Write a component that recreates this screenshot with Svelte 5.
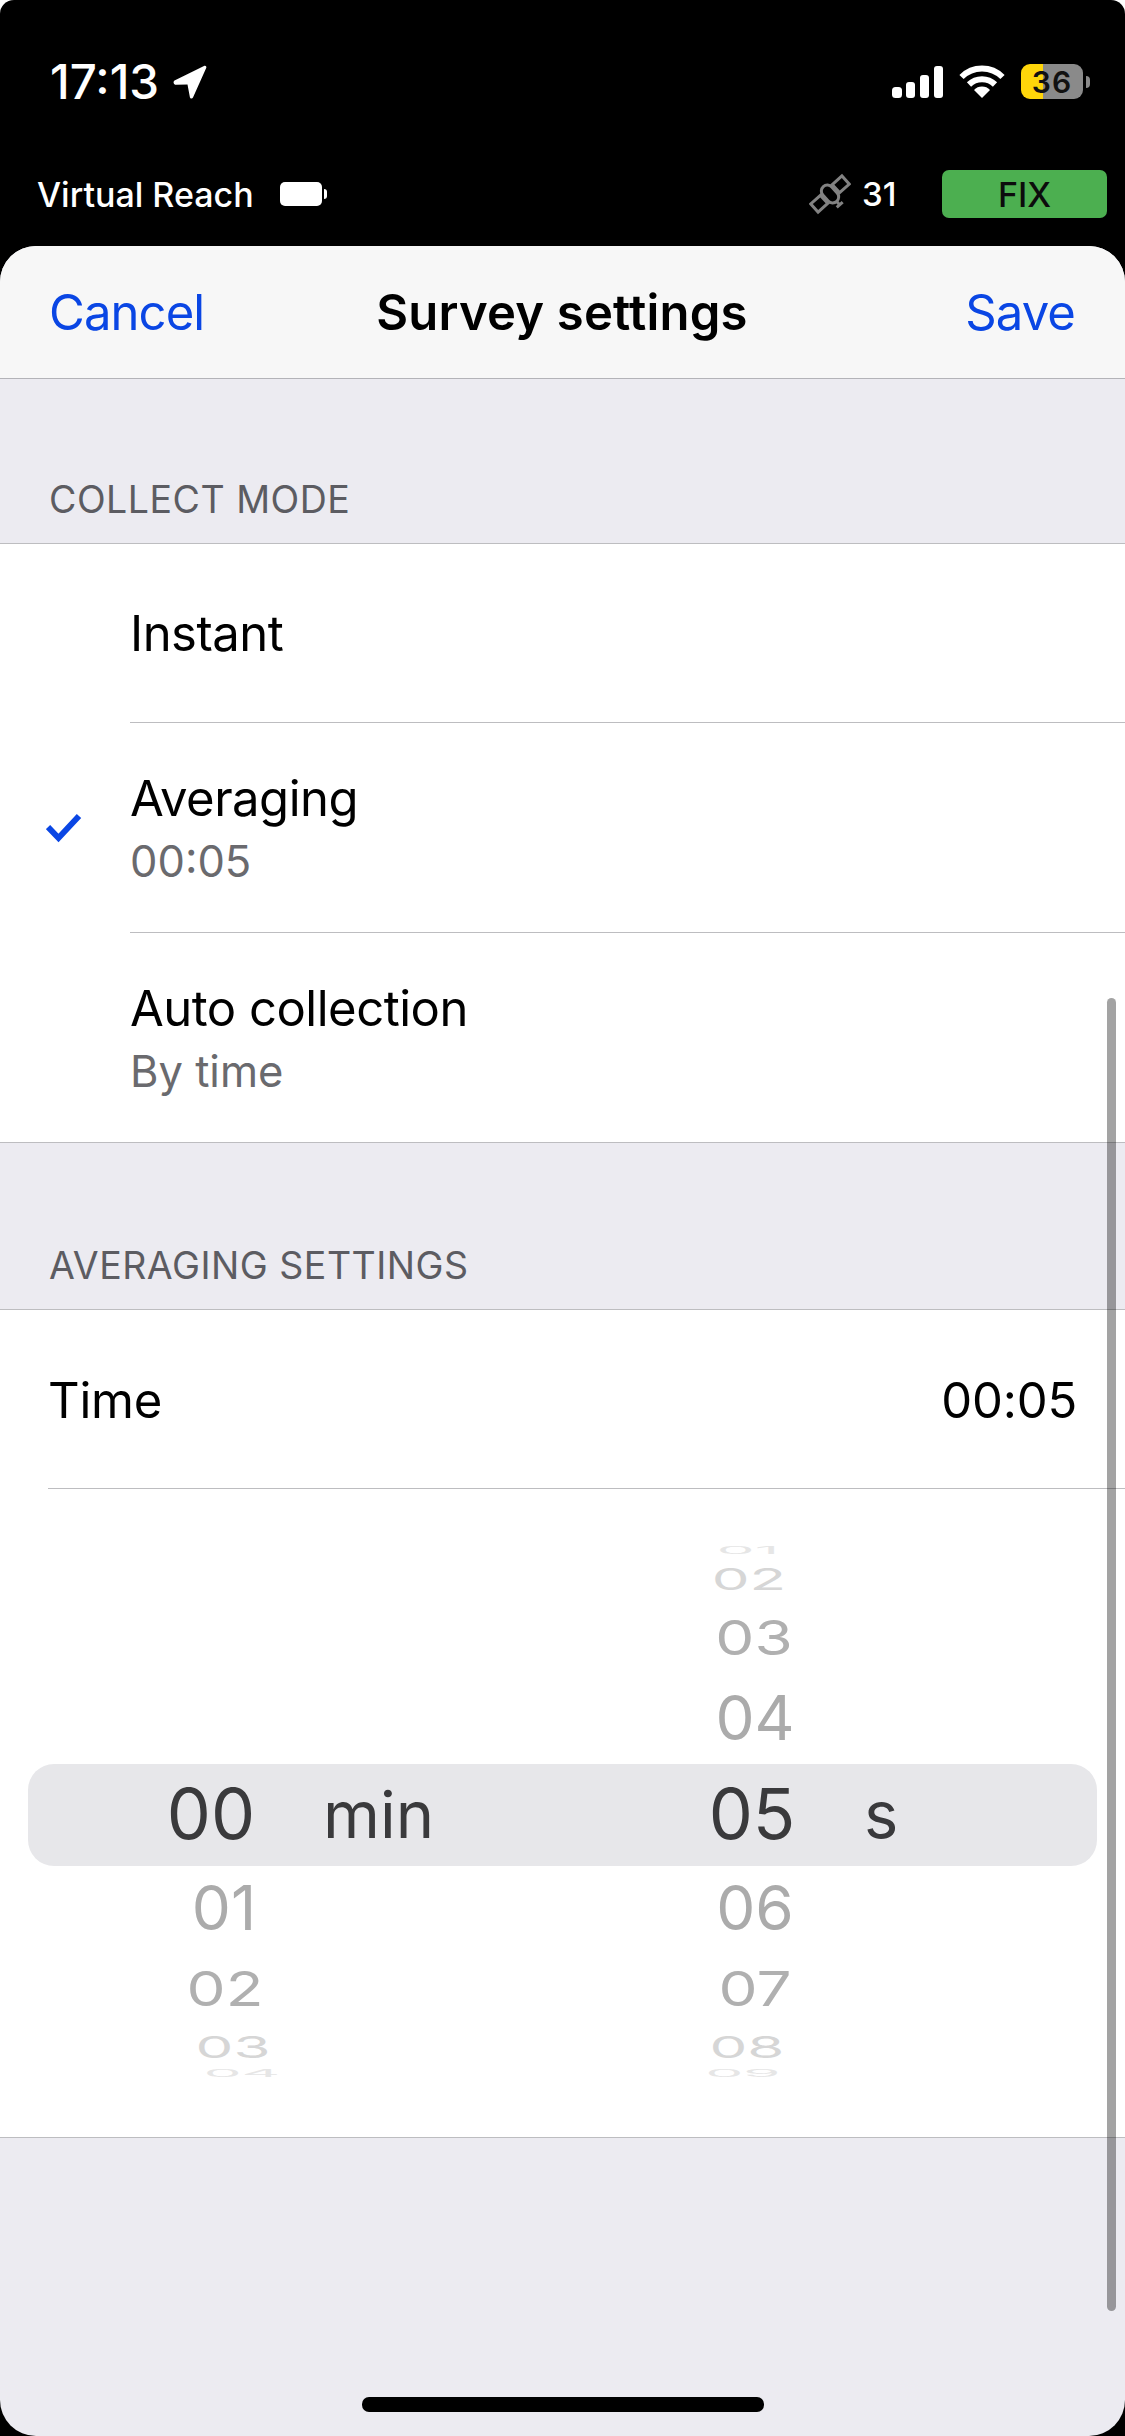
<script lang="ts">
  // picker rows share one height/scale curve so both wheels line up
  const rows = [
    { h: 28, k: 0.16, dy: -1, size: 60, color: '#e6e6e6' },
    { h: 43, k: 0.5, dy: -8, size: 60, color: '#d6d6d6' },
    { h: 70, k: 0.78, dy: -5, size: 62, color: '#b0b0b0' },
    { h: 89, k: 1, dy: -5, size: 62, color: '#ababab' },
    { h: 94, k: 1, dy: 0, size: 70, color: '#3a3a3c' },
    { h: 87, k: 1, dy: 3, size: 62, color: '#ababab' },
    { h: 70, k: 0.78, dy: 6, size: 62, color: '#b0b0b0' },
    { h: 43, k: 0.5, dy: 7, size: 60, color: '#d6d6d6' },
    { h: 28, k: 0.16, dy: -2, size: 60, color: '#e6e6e6' }
  ];

  const wheels = [
    {
      id: 'minutes',
      unit: 'min',
      values: ['', '', '', '', '00', '01', '02', '03', '04'],
      dx: [0, 0, 0, 0, 0, 13, 14, 22, 31]
    },
    {
      id: 'seconds',
      unit: 's',
      values: ['01', '02', '03', '04', '05', '06', '07', '08', '09'],
      dx: [-4, -3, 2, 3, 0, 3, 3, -5, -9]
    }
  ];
</script>

<div class="phone">
  <header class="top">
    <div class="status">
      <div class="clock">
        <span>17:13</span>
        <svg class="arrow" viewBox="0 0 36 36"><path d="M2.500 16.500 32 2c1.600-.7 2.900.5 2.200 2.100L21 33.500c-.7 1.500-2.800 1.300-3.100-.3L15.500 20.500 4 20.800c-2.400 0-3.200-3.100-1.500-4.300z" fill="#fff" /></svg>
      </div>
      <div class="indicators">
        <svg class="signal" viewBox="0 0 51 32">
          <rect x="0" y="21" width="10" height="11" rx="3.500" />
          <rect x="14" y="16" width="9" height="16" rx="3" />
          <rect x="28" y="9" width="9" height="23" rx="3" />
          <rect x="42" y="0" width="9" height="32" rx="3" />
        </svg>
        <svg class="wifi" viewBox="0 0 46 33">
          <path d="M2.500 12a29 29 0 0 1 41 0" />
          <path d="M10 19.500a18.500 18.500 0 0 1 26 0" />
          <path class="wedge" d="M15 25a11 11 0 0 1 16 0L23 33z" />
        </svg>
        <div class="battery">
          <div class="cell"><span>36</span></div>
          <i></i>
        </div>
      </div>
    </div>
    <div class="receiver">
      <div class="device">
        <span>Virtual Reach</span>
        <div class="mini-batt"><b></b><i></i></div>
      </div>
      <div class="fix-info">
        <svg class="sat" viewBox="0 0 42 42">
          <g transform="rotate(-42 21 21)" fill="none" stroke="#828282" stroke-width="3">
            <rect x="0" y="15.500" width="13" height="11" />
            <rect x="29" y="15.500" width="13" height="11" />
            <rect x="15" y="11" width="12" height="20" rx="6" />
            <path d="M13 21h2M27 21h2M21 31v4M17 35.500h8" />
          </g>
        </svg>
        <span class="count">31</span>
        <span class="fix">FIX</span>
      </div>
    </div>
  </header>

  <main class="sheet">
    <nav class="nav">
      <span class="link">Cancel</span>
      <span class="title">Survey settings</span>
      <span class="link save">Save</span>
    </nav>

    <div class="section-head">COLLECT MODE</div>
    <section class="list">
      <div class="row plain">
        <div class="lead"></div>
        <div class="body"><span>Instant</span></div>
      </div>
      <div class="row">
        <div class="lead">
          <svg class="check" viewBox="0 0 36 30"><path d="M2 14l10.500 11L33 3" /></svg>
        </div>
        <div class="body">
          <span>Averaging</span>
          <small>00:05</small>
        </div>
      </div>
      <div class="row last">
        <div class="lead"></div>
        <div class="body">
          <span>Auto collection</span>
          <small>By time</small>
        </div>
      </div>
    </section>

    <div class="section-head second">AVERAGING SETTINGS</div>
    <section class="list">
      <div class="time-row">
        <span>Time</span>
        <span>00:05</span>
      </div>
      <div class="picker">
        <div class="band"></div>
        {#each wheels as wheel}
          <div class="wheel {wheel.id}">
            {#each rows as r, i}
              <div class="cell-row" style="height: {r.h}px">
                <span
                  class="num"
                  style="font-size: {r.size}px; color: {r.color}; transform: translate({wheel.dx[i]}px, {r.dy}px) scaleY({r.k})"
                >{wheel.values[i]}</span>
                {#if i === 4}<span class="unit">{wheel.unit}</span>{/if}
              </div>
            {/each}
          </div>
        {/each}
      </div>
    </section>
  </main>

  <div class="scrollbar"></div>
  <div class="home"></div>
</div>

<style>
  :global(body) {
    margin: 0;
    background: #fff;
  }

  .phone {
    position: relative;
    width: 1125px;
    height: 2436px;
    overflow: hidden;
    display: flex;
    flex-direction: column;
    background: #000;
    border-radius: 14px 14px 0 0;
    font-family: Inter, 'Liberation Sans', sans-serif;
    color: #000;
  }

  .top {
    height: 246px;
    flex: none;
    color: #fff;
  }

  .status {
    height: 165px;
    box-sizing: border-box;
    padding: 60px 35px 0 50px;
    display: flex;
    justify-content: space-between;
    align-items: flex-start;
  }

  .clock {
    display: flex;
    align-items: center;
    gap: 13px;
    font-size: 47.500px;
    font-weight: 500;
    line-height: 44px;
  }

  .arrow {
    width: 36px;
    height: 36px;
  }

  .indicators {
    display: flex;
    align-items: center;
    padding-top: 4px;
    gap: 16px;
  }

  .signal {
    width: 51px;
    height: 32px;
    fill: #fff;
  }

  .wifi {
    width: 46px;
    height: 33px;
    fill: none;
    stroke: #fff;
    stroke-width: 6;
  }

  .wifi .wedge {
    fill: #fff;
    stroke: none;
  }

  .battery {
    display: flex;
    align-items: center;
    gap: 3px;
  }

  .battery .cell {
    width: 62px;
    height: 35px;
    border-radius: 9px;
    background: linear-gradient(to right, #ffd60a 36%, #8a8a8a 36%);
    display: flex;
    align-items: center;
    justify-content: center;
  }

  .battery .cell span {
    color: #111;
    font-size: 30px;
    font-weight: 600;
    letter-spacing: 1px;
  }

  .battery i {
    width: 4px;
    height: 12px;
    border-radius: 0 5px 5px 0;
    background: #8a8a8a;
  }

  .receiver {
    display: flex;
    justify-content: space-between;
    align-items: center;
    padding: 5px 18px 0 37px;
  }

  .device {
    display: flex;
    align-items: center;
    gap: 26px;
    font-size: 34px;
    font-weight: 500;
  }

  .mini-batt {
    display: flex;
    align-items: center;
    gap: 2px;
  }

  .mini-batt b {
    width: 42px;
    height: 24px;
    background: #fff;
    border-radius: 5px;
  }

  .mini-batt i {
    width: 3px;
    height: 10px;
    background: #fff;
    border-radius: 0 3px 3px 0;
  }

  .fix-info {
    display: flex;
    align-items: center;
  }

  .sat {
    width: 42px;
    height: 42px;
    margin-right: 11px;
  }

  .count {
    width: 44px;
    font-size: 33px;
    font-weight: 500;
  }

  .fix {
    margin-left: 36px;
    width: 165px;
    height: 48px;
    border-radius: 7px;
    background: #4caf50;
    color: #0c0c0c;
    font-size: 34px;
    font-weight: 500;
    display: flex;
    align-items: center;
    justify-content: center;
  }

  .sheet {
    flex: 1;
    background: #ecebf1;
    border-radius: 36px;
    overflow: hidden;
    display: flex;
    flex-direction: column;
  }

  .nav {
    height: 132px;
    flex: none;
    padding: 0 50px 0 49px;
    background: #f7f7f7;
    border-bottom: 1px solid #b3b3b8;
    display: grid;
    grid-template-columns: 1fr auto 1fr;
    align-items: center;
    font-size: 49px;
  }

  .link {
    color: #0a46e4;
    letter-spacing: -0.9px;
  }

  .save {
    text-align: right;
  }

  .title {
    font-weight: 600;
    letter-spacing: 0.2px;
  }

  .section-head {
    flex: none;
    height: 164px;
    box-sizing: border-box;
    padding: 0 0 21px 49px;
    display: flex;
    align-items: flex-end;
    font-size: 37.500px;
    color: #5c5c62;
    letter-spacing: 0.5px;
  }

  .section-head.second {
    height: 166px;
  }

  .list {
    flex: none;
    background: #fff;
    border-top: 1px solid #bdbdc0;
    border-bottom: 1px solid #bdbdc0;
  }

  .row {
    display: flex;
    height: 210px;
    font-size: 49px;
    letter-spacing: -0.5px;
  }

  .row.plain {
    height: 179px;
  }

  .row.last {
    height: 209px;
  }

  .lead {
    width: 130px;
    flex: none;
    display: flex;
    align-items: center;
    padding-left: 46px;
    box-sizing: border-box;
  }

  .check {
    width: 36px;
    height: 30px;
    fill: none;
    stroke: #0a46e4;
    stroke-width: 6;
  }

  .body {
    flex: 1;
    display: flex;
    flex-direction: column;
    justify-content: center;
    gap: 7px;
    border-bottom: 1px solid #bdbdc0;
  }

  .last .body {
    border-bottom: none;
  }

  .body small {
    font-size: 43.500px;
    letter-spacing: 0;
    color: #6a6a6e;
  }

  .time-row {
    height: 179px;
    margin-left: 48px;
    padding: 2px 48px 0 0;
    box-sizing: border-box;
    display: flex;
    justify-content: space-between;
    align-items: center;
    border-bottom: 1px solid #bdbdc0;
    font-size: 49px;
    letter-spacing: -0.2px;
  }

  .picker {
    position: relative;
    display: grid;
    grid-template-columns: 562px 563px;
    padding: 48px 0;
  }

  .band {
    position: absolute;
    left: 28px;
    right: 28px;
    top: 275px;
    height: 102px;
    border-radius: 26px;
    background: #e7e7ea;
  }

  .wheel {
    position: relative;
  }

  .minutes {
    padding-left: 151px;
  }

  .seconds {
    padding-left: 130px;
  }

  .cell-row {
    display: flex;
    align-items: center;
  }

  .num {
    display: block;
    width: 120px;
    flex: none;
    text-align: center;
    line-height: 1;
  }

  .unit {
    margin-left: 52px;
    font-size: 65px;
    color: #3a3a3c;
  }

  .scrollbar {
    position: absolute;
    left: 1107px;
    top: 998px;
    width: 9px;
    height: 1313px;
    border-radius: 5px;
    background: rgba(0, 0, 0, 0.36);
  }

  .home {
    position: absolute;
    left: 362px;
    top: 2397px;
    width: 402px;
    height: 15px;
    border-radius: 7px;
    background: #000;
  }
</style>
